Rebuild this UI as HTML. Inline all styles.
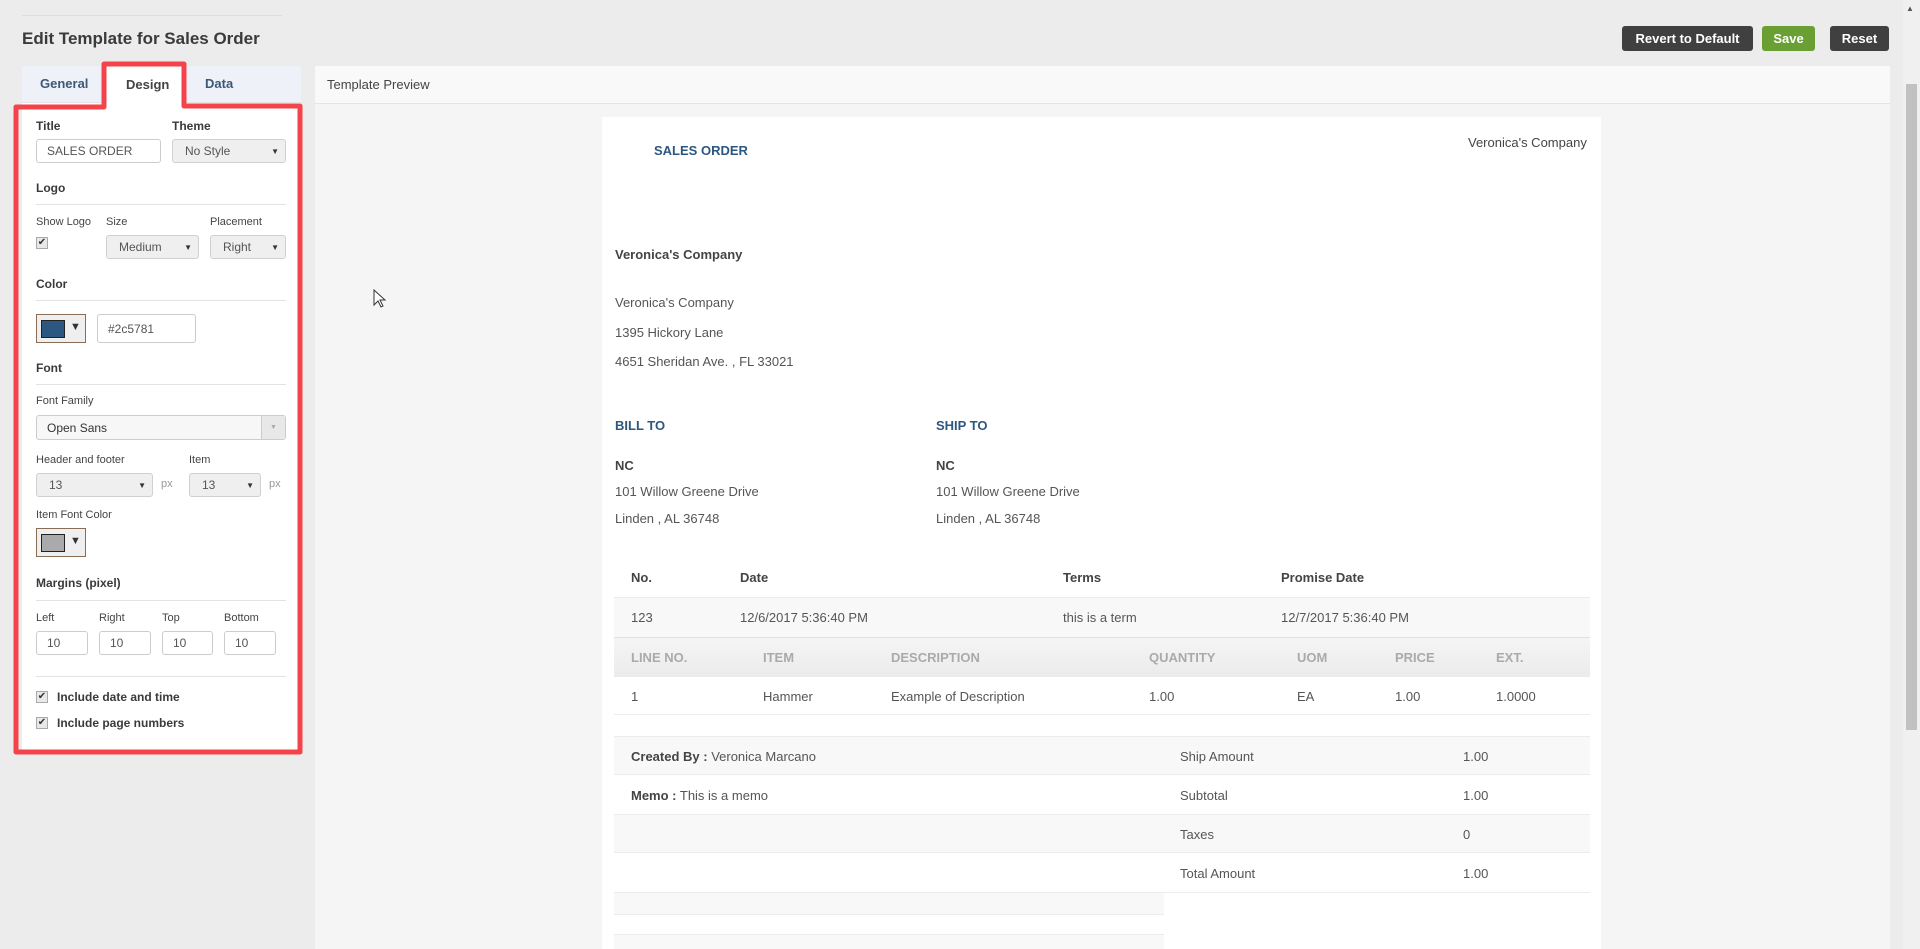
<!DOCTYPE html>
<html><head><meta charset="utf-8"><style>
*{box-sizing:border-box;margin:0;padding:0}
body{width:1920px;height:949px;overflow:hidden;background:#ececec;font-family:"Liberation Sans",sans-serif;color:#333;position:relative}
.a{position:absolute;white-space:nowrap}
.lbl{font-size:11px;color:#444}
.h{font-size:12px;font-weight:bold;color:#3a3a3a}
.hr{position:absolute;height:1px;background:#e3e3e3;left:36px;width:250px}
.inp{position:absolute;border:1px solid #ccc;border-radius:3px;background:#fff;font-size:12px;color:#555;padding-left:10px;display:flex;align-items:center}
.sel{position:absolute;border:1px solid #d0d0d0;border-radius:3px;background:#efefef;font-size:12px;color:#555;padding-left:12px;display:flex;align-items:center}
.sel:after{content:"▼";position:absolute;right:6px;font-size:8px;color:#333}
.cb{position:absolute;width:12px;height:12px;border:1px solid #aaa;background:#e8e8e8;font-size:10px;line-height:10px;text-align:center;color:#333}
.btn{position:absolute;top:26px;height:25px;border-radius:3px;color:#fff;font-size:13px;font-weight:bold;display:flex;align-items:center;justify-content:center;background:#404040}
.d{font-size:13px;color:#555}
.db{font-size:13px;font-weight:bold;color:#444}
.blue{font-size:13px;font-weight:bold;color:#2c5781}
.row{position:absolute;left:614px;width:976px}
</style></head><body>
<div class="a" style="left:22px;top:15px;width:260px;height:1px;background:#ddd"></div>
<div class="a" style="left:22px;top:29px;font-size:17px;font-weight:bold;color:#3a3a3a">Edit Template for Sales Order</div>
<div class="btn" style="left:1622px;width:131px">Revert to Default</div>
<div class="btn" style="left:1762px;width:53px;background:#6a9f34">Save</div>
<div class="btn" style="left:1830px;width:59px">Reset</div>

<!-- left panel -->
<div class="a" style="left:22px;top:66px;width:279px;height:37px;background:#eef2f8;border-bottom:1px solid #e4e4e4"></div>
<div class="a" style="left:103px;top:66px;width:82px;height:38px;background:#fff"></div>
<div class="a" style="left:22px;top:103px;width:279px;height:650px;background:#fff"></div>
<div class="a" style="left:40px;top:76px;font-size:13px;font-weight:bold;color:#3d5877">General</div>
<div class="a" style="left:126px;top:77px;font-size:13px;font-weight:bold;color:#444">Design</div>
<div class="a" style="left:205px;top:76px;font-size:13px;font-weight:bold;color:#3d5877">Data</div>
<!-- red outline -->
<svg class="a" style="left:0;top:0" width="320" height="770"><path d="M16 107 L104 107 L104 64 L184 64 L184 106 L300 106 L300 752 L16 752 Z" fill="none" stroke="#f4434a" stroke-width="5" stroke-linejoin="round"/></svg>

<div class="a h" style="left:36px;top:119px">Title</div>
<div class="a h" style="left:172px;top:119px">Theme</div>
<div class="inp" style="left:36px;top:139px;width:125px;height:24px">SALES ORDER</div>
<div class="sel" style="left:172px;top:139px;width:114px;height:24px">No Style</div>
<div class="a h" style="left:36px;top:181px">Logo</div>
<div class="hr" style="top:204px"></div>
<div class="a lbl" style="left:36px;top:216px">Show Logo</div>
<div class="a lbl" style="left:106px;top:216px">Size</div>
<div class="a lbl" style="left:210px;top:216px">Placement</div>
<div class="cb" style="left:36px;top:237px">✔</div>
<div class="sel" style="left:106px;top:235px;width:93px;height:24px">Medium</div>
<div class="sel" style="left:210px;top:235px;width:76px;height:24px">Right</div>
<div class="a h" style="left:36px;top:277px">Color</div>
<div class="hr" style="top:300px"></div>
<div class="a" style="left:36px;top:314px;width:50px;height:29px;border:1px solid #8a6d55;background:#efefef"><div class="a" style="left:4px;top:5px;width:24px;height:18px;background:#2c5781;border:1px solid #222"></div><div class="a" style="left:33px;top:6px;font-size:11px">▼</div></div>
<div class="inp" style="left:97px;top:314px;width:99px;height:29px">#2c5781</div>
<div class="a h" style="left:36px;top:361px">Font</div>
<div class="hr" style="top:384px"></div>
<div class="a lbl" style="left:36px;top:395px">Font Family</div>
<div class="inp" style="left:36px;top:415px;width:250px;height:25px;background:#f7f7f7;color:#333">Open Sans<div class="a" style="right:0;top:0;width:24px;height:23px;border-left:1px solid #ccc;background:#e8e8e8;font-size:7px;color:#aaa;text-align:center;line-height:23px">▼</div></div>
<div class="a lbl" style="left:36px;top:454px">Header and footer</div>
<div class="a lbl" style="left:189px;top:454px">Item</div>
<div class="sel" style="left:36px;top:473px;width:117px;height:24px">13</div>
<div class="a lbl" style="left:161px;top:478px;color:#999">px</div>
<div class="sel" style="left:189px;top:473px;width:72px;height:24px">13</div>
<div class="a lbl" style="left:269px;top:478px;color:#999">px</div>
<div class="a lbl" style="left:36px;top:509px">Item Font Color</div>
<div class="a" style="left:36px;top:528px;width:50px;height:29px;border:1px solid #8a6d55;background:#efefef"><div class="a" style="left:4px;top:5px;width:24px;height:18px;background:#aaa;border:1px solid #222"></div><div class="a" style="left:33px;top:6px;font-size:11px">▼</div></div>
<div class="a h" style="left:36px;top:576px">Margins (pixel)</div>
<div class="hr" style="top:600px"></div>
<div class="a lbl" style="left:36px;top:612px">Left</div>
<div class="a lbl" style="left:99px;top:612px">Right</div>
<div class="a lbl" style="left:162px;top:612px">Top</div>
<div class="a lbl" style="left:224px;top:612px">Bottom</div>
<div class="inp" style="left:36px;top:631px;width:52px;height:24px">10</div>
<div class="inp" style="left:99px;top:631px;width:52px;height:24px">10</div>
<div class="inp" style="left:162px;top:631px;width:51px;height:24px">10</div>
<div class="inp" style="left:224px;top:631px;width:52px;height:24px">10</div>
<div class="hr" style="top:676px"></div>
<div class="cb" style="left:36px;top:691px">✔</div>
<div class="a h" style="left:57px;top:690px;font-size:12px">Include date and time</div>
<div class="cb" style="left:36px;top:717px">✔</div>
<div class="a h" style="left:57px;top:716px;font-size:12px">Include page numbers</div>

<!-- right panel -->
<div class="a" style="left:315px;top:66px;width:1575px;height:883px;background:#f5f5f5"></div>
<div class="a" style="left:315px;top:66px;width:1575px;height:38px;background:#f9f9f9;border-bottom:1px solid #e5e5e5"></div>
<div class="a" style="left:327px;top:77px;font-size:13px;color:#444">Template Preview</div>
<div class="a" style="left:602px;top:117px;width:999px;height:832px;background:#fff"></div>

<div class="a blue" style="left:654px;top:143px">SALES ORDER</div>
<div class="a d" style="left:1468px;top:135px;color:#444">Veronica's Company</div>
<div class="a db" style="left:615px;top:247px">Veronica's Company</div>
<div class="a d" style="left:615px;top:295px">Veronica's Company</div>
<div class="a d" style="left:615px;top:325px">1395 Hickory Lane</div>
<div class="a d" style="left:615px;top:354px">4651 Sheridan Ave. , FL 33021</div>
<div class="a blue" style="left:615px;top:418px">BILL TO</div>
<div class="a blue" style="left:936px;top:418px">SHIP TO</div>
<div class="a db" style="left:615px;top:458px">NC</div>
<div class="a db" style="left:936px;top:458px">NC</div>
<div class="a d" style="left:615px;top:484px">101 Willow Greene Drive</div>
<div class="a d" style="left:936px;top:484px">101 Willow Greene Drive</div>
<div class="a d" style="left:615px;top:511px">Linden , AL 36748</div>
<div class="a d" style="left:936px;top:511px">Linden , AL 36748</div>

<div class="a db" style="left:631px;top:570px">No.</div>
<div class="a db" style="left:740px;top:570px">Date</div>
<div class="a db" style="left:1063px;top:570px">Terms</div>
<div class="a db" style="left:1281px;top:570px">Promise Date</div>
<div class="row" style="top:597px;height:40px;background:#f8f8f8;border-top:1px solid #ececec"></div>
<div class="a d" style="left:631px;top:610px">123</div>
<div class="a d" style="left:740px;top:610px">12/6/2017 5:36:40 PM</div>
<div class="a d" style="left:1063px;top:610px">this is a term</div>
<div class="a d" style="left:1281px;top:610px">12/7/2017 5:36:40 PM</div>
<div class="row" style="top:637px;height:40px;background:linear-gradient(#f5f5f5,#ebebeb);border-top:1px solid #e0e0e0"></div>
<div class="a db" style="left:631px;top:650px;color:#aaa">LINE NO.</div>
<div class="a db" style="left:763px;top:650px;color:#aaa">ITEM</div>
<div class="a db" style="left:891px;top:650px;color:#aaa">DESCRIPTION</div>
<div class="a db" style="left:1149px;top:650px;color:#aaa">QUANTITY</div>
<div class="a db" style="left:1297px;top:650px;color:#aaa">UOM</div>
<div class="a db" style="left:1395px;top:650px;color:#aaa">PRICE</div>
<div class="a db" style="left:1496px;top:650px;color:#aaa">EXT.</div>
<div class="row" style="top:714px;height:1px;background:#ececec"></div>
<div class="a d" style="left:631px;top:689px">1</div>
<div class="a d" style="left:763px;top:689px">Hammer</div>
<div class="a d" style="left:891px;top:689px">Example of Description</div>
<div class="a d" style="left:1149px;top:689px">1.00</div>
<div class="a d" style="left:1297px;top:689px">EA</div>
<div class="a d" style="left:1395px;top:689px">1.00</div>
<div class="a d" style="left:1496px;top:689px">1.0000</div>

<div class="row" style="top:736px;height:39px;background:#f8f8f8;border-top:1px solid #ececec;border-bottom:1px solid #ececec"></div>
<div class="row" style="top:814px;height:39px;background:#f8f8f8;border-top:1px solid #ececec;border-bottom:1px solid #ececec"></div>
<div class="row" style="top:892px;height:1px;background:#ececec"></div>
<div class="a" style="left:614px;top:893px;width:550px;height:22px;background:#f8f8f8;border-bottom:1px solid #ececec"></div>
<div class="a" style="left:614px;top:934px;width:550px;height:15px;background:#f8f8f8;border-top:1px solid #ececec"></div>
<div class="a d" style="left:631px;top:749px"><b style="color:#444">Created By :</b> Veronica Marcano</div>
<div class="a d" style="left:631px;top:788px"><b style="color:#444">Memo :</b> This is a memo</div>
<div class="a d" style="left:1180px;top:749px">Ship Amount</div>
<div class="a d" style="left:1180px;top:788px">Subtotal</div>
<div class="a d" style="left:1180px;top:827px">Taxes</div>
<div class="a d" style="left:1180px;top:866px">Total Amount</div>
<div class="a d" style="left:1463px;top:749px">1.00</div>
<div class="a d" style="left:1463px;top:788px">1.00</div>
<div class="a d" style="left:1463px;top:827px">0</div>
<div class="a d" style="left:1463px;top:866px">1.00</div>

<!-- cursor -->
<svg class="a" style="left:373px;top:289px" width="14" height="20"><path d="M1 1 L1 16 L5 12 L8 18 L10 17 L7 11 L12 11 Z" fill="#fff" stroke="#333" stroke-width="1"/></svg>

<!-- scrollbar -->
<div class="a" style="left:1903px;top:0;width:17px;height:949px;background:#f0f0f0"></div>
<div class="a" style="left:1906px;top:84px;width:11px;height:646px;background:#c1c1c1"></div>
<div class="a" style="left:1906px;top:4px;font-size:8px;color:#555">▲</div>
</body></html>
